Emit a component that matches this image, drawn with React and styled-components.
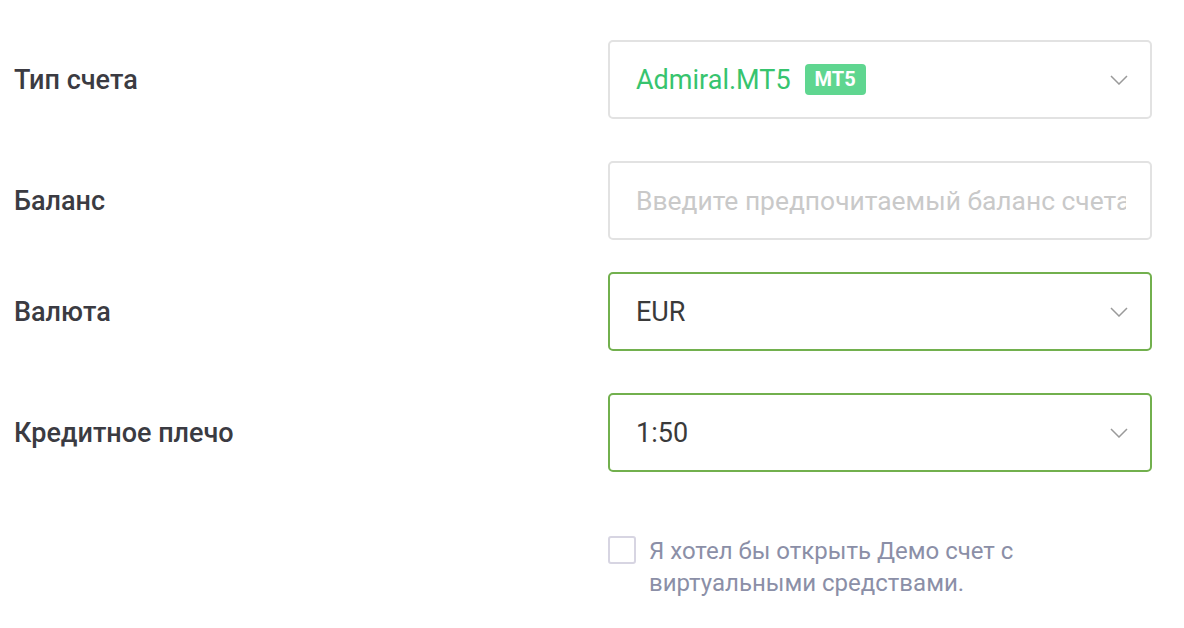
import React from "react";
import styled, { createGlobalStyle } from "styled-components";

const Global = createGlobalStyle`
  html, body { margin: 0; padding: 0; background: #ffffff; }
  body { font-family: Roboto, "Noto Sans", sans-serif; }
`;

const Form = styled.div`
  padding: 40px 0 0 14px;
  display: flex;
  flex-direction: column;
`;

const Row = styled.div`
  display: grid;
  grid-template-columns: 594px 544px;
  align-items: center;
  margin-bottom: ${(p) => p.$mb}px;
`;

const Label = styled.div`
  font-size: 27px;
  font-weight: 500;
  color: #3b3b42;
  line-height: 30px;
`;

const Field = styled.div`
  box-sizing: border-box;
  height: 79px;
  border: 2px solid ${(p) => (p.$active ? "#72b04e" : "#e2e2e2")};
  border-radius: 5px;
  display: flex;
  align-items: center;
  padding: 0 22px 0 26px;
  gap: 14px;
  background: #fff;
  overflow: hidden;
`;

const Value = styled.span`
  font-size: 27px;
  color: ${(p) => p.$color || "#3a3a3a"};
  white-space: nowrap;
`;

const Placeholder = styled.span`
  font-size: 26.4px;
  color: #c9c9c9;
  white-space: nowrap;
  overflow: hidden;
  min-width: 0;
  flex: 1;
  margin-right: 2px;
`;

const Badge = styled.span`
  background: #5fd690;
  color: #fff;
  font-weight: 700;
  font-size: 20px;
  border-radius: 4px;
  padding: 0 10px;
  height: 31px;
  line-height: 31px;
`;

const Chevron = styled.svg`
  margin-left: auto;
  flex: none;
`;

const CheckRow = styled.div`
  display: grid;
  grid-template-columns: 594px 544px;
  margin-top: 64px;
`;

const CheckWrap = styled.label`
  display: flex;
  align-items: flex-start;
  gap: 13px;
`;

const Box = styled.span`
  box-sizing: border-box;
  flex: none;
  width: 28px;
  height: 28px;
  border: 2px solid #d7d5e2;
  border-radius: 3px;
`;

const CheckText = styled.span`
  font-size: 24px;
  line-height: 32px;
  color: #8b8fa7;
  margin-top: -1px;
  max-width: 400px;
`;

const Arrow = () => (
  <Chevron width="18" height="10" viewBox="0 0 18 10">
    <path d="M1 1 L9 9 L17 1" fill="none" stroke="#9a9a9a" strokeWidth="1.5" />
  </Chevron>
);

export default function App() {
  return (
    <>
      <Global />
      <Form>
        <Row $mb={42}>
          <Label>Тип счета</Label>
          <Field>
            <Value $color="#37c46e">Admiral.MT5</Value>
            <Badge>MT5</Badge>
            <Arrow />
          </Field>
        </Row>
        <Row $mb={32}>
          <Label>Баланс</Label>
          <Field>
            <Placeholder>Введите предпочитаемый баланс счета</Placeholder>
          </Field>
        </Row>
        <Row $mb={42}>
          <Label>Валюта</Label>
          <Field $active>
            <Value>EUR</Value>
            <Arrow />
          </Field>
        </Row>
        <Row $mb={0}>
          <Label>Кредитное плечо</Label>
          <Field $active>
            <Value>1:50</Value>
            <Arrow />
          </Field>
        </Row>
        <CheckRow>
          <span />
          <CheckWrap>
            <Box />
            <CheckText>Я хотел бы открыть Демо счет с виртуальными средствами.</CheckText>
          </CheckWrap>
        </CheckRow>
      </Form>
    </>
  );
}
